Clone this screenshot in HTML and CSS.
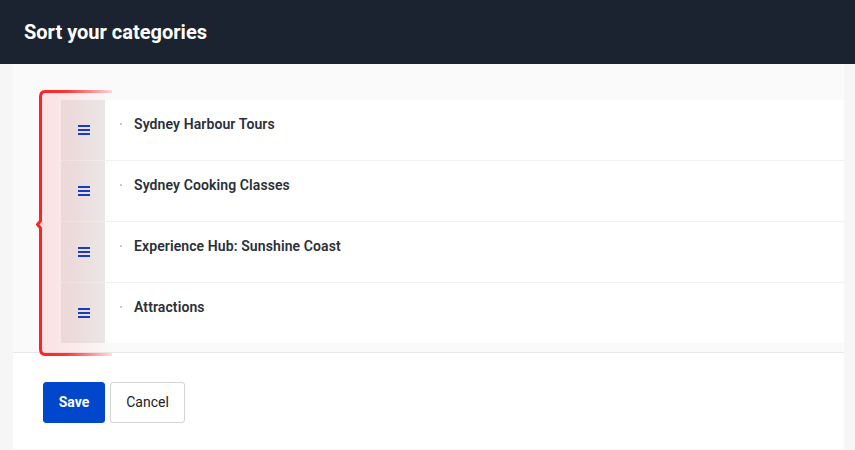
FILE: index.html
```html
<!DOCTYPE html>
<html lang="en">
<head>
    <meta charset="UTF-8">
    <title>Sort your categories</title>
    <link rel="stylesheet" href="styles.css">
</head>
<body>
    <header class="top-bar">
        <h1>Sort your categories</h1>
    </header>
    <div class="panel">
        <div class="sort-area">
            <svg class="highlight" width="80" height="270" viewBox="0 0 80 270">
                <defs>
                    <linearGradient id="strokeFade" gradientUnits="userSpaceOnUse" x1="0" y1="0" x2="76" y2="0">
                        <stop offset="0" stop-color="#ff1f1f" stop-opacity="1"/>
                        <stop offset="0.4" stop-color="#ff1f1f" stop-opacity="0.9"/>
                        <stop offset="1" stop-color="#ff1f1f" stop-opacity="0.15"/>
                    </linearGradient>
                    <linearGradient id="fillFade" gradientUnits="userSpaceOnUse" x1="0" y1="0" x2="76" y2="0">
                        <stop offset="0" stop-color="#ff2020" stop-opacity="0.12"/>
                        <stop offset="0.5" stop-color="#ff2020" stop-opacity="0.07"/>
                        <stop offset="1" stop-color="#ff2020" stop-opacity="0"/>
                    </linearGradient>
                </defs>
                <path d="M76 2.5 H9 Q4.5 2.5 4.5 8 V132 L1.5 135.5 L4.5 139 V260 Q4.5 265.5 9 265.5 H76 Z" fill="url(#fillFade)" stroke="none"/>
                <path d="M76 2.5 H9 Q4.5 2.5 4.5 8 V132 L1.5 135.5 L4.5 139 V260 Q4.5 265.5 9 265.5 H76" fill="none" stroke="url(#strokeFade)" stroke-width="3"/>
            </svg>
            <ul class="sort-list">
                <li class="sort-item">
                    <div class="handle">
                        <svg width="12" height="10" viewBox="0 0 12 10"><path d="M0 1h12M0 5h12M0 9h12" stroke="#0a3fc8" stroke-width="2"/></svg>
                    </div>
                    <div class="label"><span class="dot"></span>Sydney Harbour Tours</div>
                </li>
                <li class="sort-item">
                    <div class="handle">
                        <svg width="12" height="10" viewBox="0 0 12 10"><path d="M0 1h12M0 5h12M0 9h12" stroke="#0a3fc8" stroke-width="2"/></svg>
                    </div>
                    <div class="label"><span class="dot"></span>Sydney Cooking Classes</div>
                </li>
                <li class="sort-item">
                    <div class="handle">
                        <svg width="12" height="10" viewBox="0 0 12 10"><path d="M0 1h12M0 5h12M0 9h12" stroke="#0a3fc8" stroke-width="2"/></svg>
                    </div>
                    <div class="label"><span class="dot"></span>Experience Hub: Sunshine Coast</div>
                </li>
                <li class="sort-item">
                    <div class="handle">
                        <svg width="12" height="10" viewBox="0 0 12 10"><path d="M0 1h12M0 5h12M0 9h12" stroke="#0a3fc8" stroke-width="2"/></svg>
                    </div>
                    <div class="label"><span class="dot"></span>Attractions</div>
                </li>
            </ul>
        </div>
        <div class="footer">
            <button class="btn btn-primary">Save</button>
            <button class="btn btn-default">Cancel</button>
        </div>
    </div>
</body>
</html>
```

FILE: styles.css
```css
body {
    margin: 0;
    background: #f6f6f6;
    font-family: Roboto, "Liberation Sans", sans-serif;
    height: 450px;
    overflow: hidden;
}
.top-bar {
    height: 64px;
    background: #1a232f;
    display: flex;
    align-items: center;
    padding-left: 24px;
}
.top-bar h1 {
    margin: 0;
    color: #fff;
    font-size: 20px;
    font-weight: 700;
}
.panel {
    margin: 0 11px 0 13px;
    background: #fafafa;
}
.sort-area {
    position: relative;
    padding: 36px 0 9px 48px;
    border-bottom: 1px solid #e8e8e8;
}
.highlight {
    position: absolute;
    left: 23px;
    top: 25px;
    pointer-events: none;
}
.sort-list {
    list-style: none;
    margin: 0;
    padding: 0;
    background: #fff;
}
.sort-item {
    display: flex;
    height: 60px;
    border-bottom: 1px solid #f1f1f1;
}
.sort-item:last-child {
    border-bottom: none;
}
.handle {
    width: 44px;
    background: #ebe9e9;
    display: flex;
    align-items: center;
    justify-content: center;
}
.handle svg {
    margin-left: 2px;
}
.label {
    display: flex;
    align-items: center;
    height: 20px;
    padding-top: 14px;
    font-size: 14px;
    font-weight: 600;
    letter-spacing: 0.1px;
    color: #2b2f38;
}
.dot {
    width: 2px;
    height: 2px;
    background: #c8c8c8;
    margin: 0 12px 0 15px;
}
.footer {
    background: #fff;
    height: 96px;
    padding: 29px 30px 0;
    box-sizing: border-box;
    display: flex;
    align-items: flex-start;
    gap: 5px;
}
.btn {
    height: 41px;
    border-radius: 3px;
    font-family: Roboto, "Liberation Sans", sans-serif;
    font-size: 14px;
    padding: 0 0 2px;
    cursor: pointer;
}
.btn-primary {
    background: #0047cc;
    color: #fff;
    border: 1px solid #0047cc;
    font-weight: 700;
    width: 62px;
}
.btn-default {
    background: #fff;
    color: #222;
    border: 1px solid #d3d3d3;
    width: 75px;
}
```
